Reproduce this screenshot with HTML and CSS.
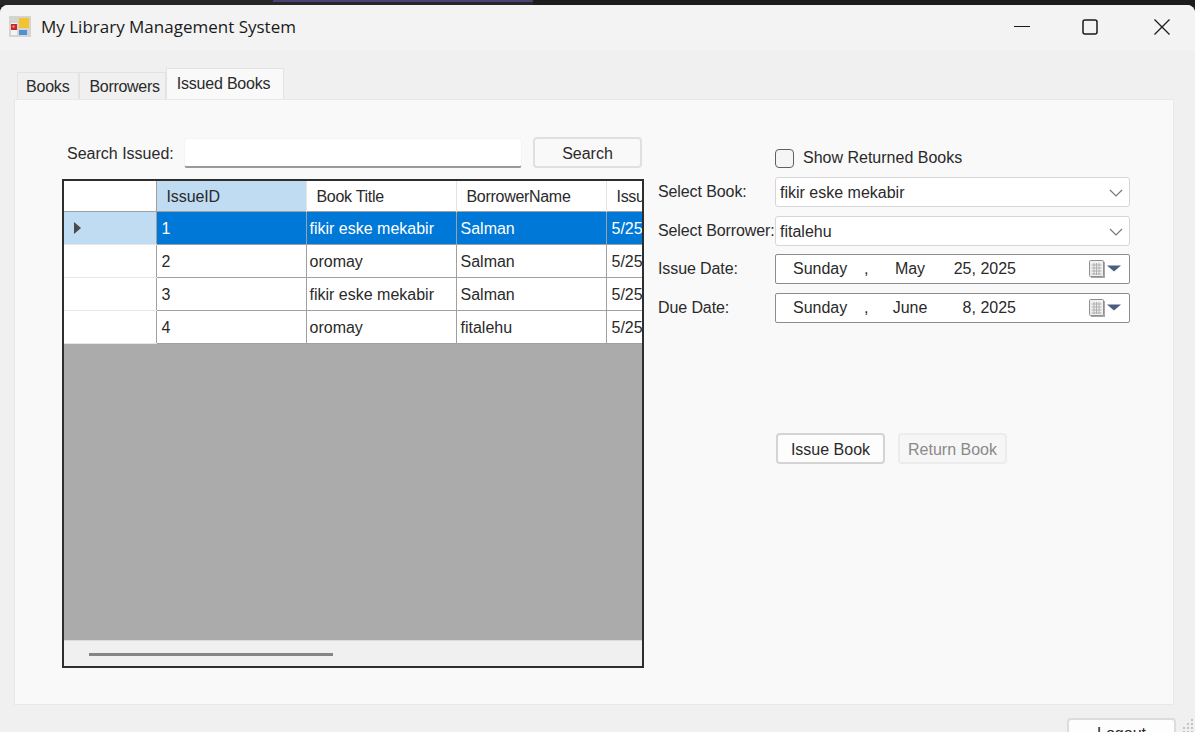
FILE: index.html
```html
<!DOCTYPE html>
<html lang="en">
<head>
  <meta charset="UTF-8" />
  <title>My Library Management System</title>
  <link rel="stylesheet" href="styles.css">
</head>
<body>
  <div class="taskstrip">
    <div class="strip-a"></div>
    <div class="strip-b"></div>
    <div class="strip-c"></div>
  </div>

  <div class="window">
    <div class="titlebar">
      <svg class="app-icon" width="22" height="21" viewBox="0 0 22 21">
        <rect x="0" y="0" width="22" height="21" fill="#d4d4d0"/>
        <rect x="2" y="7" width="6" height="12" fill="#f4f4f4"/>
        <rect x="2" y="8" width="6" height="6" fill="#c8262c"/>
        <rect x="3.5" y="9.5" width="2" height="2" fill="#f2a0a0"/>
        <rect x="10" y="2" width="10" height="10" fill="#f4c430"/>
        <rect x="10" y="14" width="8" height="5" fill="#4f8fd8"/>
      </svg>
      <span class="app-title">My Library Management System</span>
      <div class="caption-btns">
        <svg width="16" height="16" viewBox="0 0 16 16"><path d="M0 7.5H16" stroke="#1a1a1a" stroke-width="1.2" fill="none"/></svg>
        <svg width="16" height="16" viewBox="0 0 16 16"><rect x="1" y="1" width="14" height="14" rx="2" stroke="#1a1a1a" stroke-width="1.5" fill="none"/></svg>
        <svg class="caption-close" width="16" height="16" viewBox="0 0 16 16"><path d="M0.5 0.5L15.5 15.5M15.5 0.5L0.5 15.5" stroke="#1a1a1a" stroke-width="1.3" fill="none"/></svg>
      </div>
    </div>

    <div class="client">
      <div class="tabs">
        <div class="tab">Books</div>
        <div class="tab tab-borrowers">Borrowers</div>
        <div class="tab tab-active">Issued Books</div>
      </div>

      <div class="panel">
        <div class="left-col">
          <div class="search-row">
            <label class="search-label">Search Issued:</label>
            <div class="search-box"></div>
            <div class="btn search-btn">Search</div>
          </div>

          <div class="grid-box">
            <table class="grid">
              <colgroup>
                <col class="col-head">
                <col class="col-data">
                <col class="col-data">
                <col class="col-data">
                <col class="col-data">
              </colgroup>
              <tr class="head-row">
                <th></th>
                <th class="th-current">IssueID</th>
                <th>Book Title</th>
                <th>BorrowerName</th>
                <th>IssueDate</th>
              </tr>
              <tr class="selected">
                <td class="row-head row-head-on"><span class="row-arrow"></span></td>
                <td>1</td><td>fikir eske mekabir</td><td>Salman</td><td>5/25/2025</td>
              </tr>
              <tr>
                <td class="row-head"></td>
                <td>2</td><td>oromay</td><td>Salman</td><td>5/25/2025</td>
              </tr>
              <tr>
                <td class="row-head"></td>
                <td>3</td><td>fikir eske mekabir</td><td>Salman</td><td>5/25/2025</td>
              </tr>
              <tr>
                <td class="row-head"></td>
                <td>4</td><td>oromay</td><td>fitalehu</td><td>5/25/2025</td>
              </tr>
            </table>
            <div class="grid-empty"></div>
            <div class="hscroll"><div class="hscroll-thumb"></div></div>
          </div>
        </div>

        <div class="right-col">
          <div class="check-row">
            <span class="checkbox"></span>
            <span>Show Returned Books</span>
          </div>

          <div class="field field-book">
            <label>Select Book:</label>
            <div class="combo">
              <span>fikir eske mekabir</span>
              <svg class="chevron" width="14" height="8" viewBox="0 0 14 8"><path d="M1 1L7 7L13 1" stroke="#777" stroke-width="1.2" fill="none"/></svg>
            </div>
          </div>
          <div class="field field-borrower">
            <label>Select Borrower:</label>
            <div class="combo">
              <span>fitalehu</span>
              <svg class="chevron" width="14" height="8" viewBox="0 0 14 8"><path d="M1 1L7 7L13 1" stroke="#777" stroke-width="1.2" fill="none"/></svg>
            </div>
          </div>
          <div class="field field-issue">
            <label>Issue Date:</label>
            <div class="datebox">
              <span>Sunday</span><span>,</span><span class="d-month">May</span><span class="d-day">25, 2025</span>
              <svg class="cal" width="32" height="18" viewBox="0 0 32 18">
                <rect x="2" y="2" width="14" height="16" fill="#a8a8a8"/>
                <rect x="0.5" y="0.5" width="14" height="16" rx="1" fill="#f0f0f0" stroke="#8e8e8e"/>
                <path d="M2.5 5H12.5M2.5 8H12.5M2.5 11H12.5M2.5 14H12.5M5 3V15M7.5 3V15M10 3V15" stroke="#b0b0b0" stroke-width="1" fill="none"/>
                <path d="M18 5.5H32L25 11.5Z" fill="#4a5f80"/>
              </svg>
            </div>
          </div>
          <div class="field field-due">
            <label>Due Date:</label>
            <div class="datebox">
              <span>Sunday</span><span>,</span><span class="d-month">June</span><span class="d-day">8, 2025</span>
              <svg class="cal" width="32" height="18" viewBox="0 0 32 18">
                <rect x="2" y="2" width="14" height="16" fill="#a8a8a8"/>
                <rect x="0.5" y="0.5" width="14" height="16" rx="1" fill="#f0f0f0" stroke="#8e8e8e"/>
                <path d="M2.5 5H12.5M2.5 8H12.5M2.5 11H12.5M2.5 14H12.5M5 3V15M7.5 3V15M10 3V15" stroke="#b0b0b0" stroke-width="1" fill="none"/>
                <path d="M18 5.5H32L25 11.5Z" fill="#4a5f80"/>
              </svg>
            </div>
          </div>

          <div class="action-row">
            <div class="btn issue-btn">Issue Book</div>
            <div class="btn return-btn">Return Book</div>
          </div>
        </div>
      </div>

      <div class="footer-row">
        <div class="btn logout-btn">Logout</div>
        <svg class="grip" width="15" height="15" viewBox="0 0 15 15">
          <path d="M11 1h2v2h-2zM7 5h2v2H7zM11 5h2v2h-2zM3 9h2v2H3zM7 9h2v2H7zM11 9h2v2h-2zM3 13h2v2H3zM7 13h2v2H7zM11 13h2v2h-2z" fill="#c4c4c4"/>
        </svg>
      </div>
    </div>
  </div>
</body>
</html>
```

FILE: styles.css
```css
* {
  box-sizing: border-box;
}
html, body {
  height: 100%;
}
body {
  margin: 0;
  overflow: hidden;
  background-color: #1f1f1f;
  font-family: "Liberation Sans", Arial, sans-serif;
  font-size: 16px;
  color: #2a2a2a;
}

/* strip of the desktop above the window */
.taskstrip {
  display: flex;
  height: 5px;
}
.strip-a {
  width: 273px;
  background-color: #262626;
}
.strip-b {
  width: 260px;
  background-color: #262626;
  border-top: 2px solid #4b3f78;
}
.strip-c {
  flex: 1;
  background-color: #1c1c1c;
}

.window {
  height: 727px;
  background-color: #f0f0f0;
  border-radius: 8px 8px 0 0;
  overflow: hidden;
}
.titlebar {
  display: flex;
  align-items: center;
  height: 46px;
  padding: 0 0 3px 9px;
  background-color: #f3f3f3;
}
.app-icon {
  margin-right: 10px;
}
.app-title {
  font-family: "Open Sans", sans-serif;
  font-size: 17px;
  color: #1a1a1a;
}
.caption-btns {
  display: flex;
  gap: 52px;
  margin-left: auto;
  margin-right: 25px;
}
.caption-close {
  margin-left: 4px;
}

.client {
  padding: 17px 21px 0 14px;
}
.tabs {
  display: flex;
  align-items: flex-end;
  height: 31px;
  padding-left: 3px;
}
.tab {
  height: 27px;
  padding: 5px 9px 0 8px;
  background-color: #f0f0f0;
  border: 1px solid #e3e3e3;
  border-bottom: none;
  letter-spacing: -0.2px;
}
.tab-borrowers {
  padding: 5px 5px 0 9px;
  letter-spacing: -0.3px;
}
.tab-active {
  height: 31px;
  padding: 6px 13px 0 10px;
  background-color: #f9f9f9;
}

.panel {
  display: flex;
  height: 606px;
  padding: 38px 0 0 47px;
  background-color: #f9f9f9;
  border: 1px solid #e8e8e8;
}

.left-col {
  width: 582px;
}
.search-row {
  display: flex;
  align-items: center;
  height: 30px;
  padding-left: 5px;
}
.search-label {
  width: 117px;
  padding-top: 1px;
}
.search-box {
  width: 338px;
  height: 30px;
  background-color: #fff;
  border: 1px solid #f4f4f4;
  border-bottom: 2px solid #9a9a9a;
  border-radius: 3px;
}
.btn {
  display: flex;
  align-items: center;
  justify-content: center;
  padding-top: 3px;
  background-color: #fdfdfd;
  border: 2px solid #e0e0e0;
  border-radius: 4px;
}
.search-btn {
  width: 109px;
  height: 31px;
  margin: -2px 0 0 11px;
  padding-top: 4px;
  background-color: #f9f9f9;
}

.grid-box {
  width: 582px;
  height: 489px;
  margin-top: 11px;
  border: 2px solid #2e2e2e;
  overflow: hidden;
  display: flex;
  flex-direction: column;
}
.grid {
  table-layout: fixed;
  width: 692px;
  border-collapse: collapse;
  background-color: #fff;
  flex: none;
}
.col-head {
  width: 92px;
}
.col-data {
  width: 150px;
}
.grid th {
  height: 30px;
  padding: 2px 0 0 10px;
  font-weight: normal;
  text-align: left;
  white-space: nowrap;
  overflow: hidden;
  letter-spacing: -0.3px;
  border-right: 1px solid #e4e4e4;
}
.grid th:first-child {
  border-right: 1px solid #a0a0a0;
}
.grid th.th-current {
  background-color: #bfdcf3;
  letter-spacing: -0.1px;
}
.grid td {
  height: 33px;
  padding: 2px 0 0 3px;
  white-space: nowrap;
  overflow: hidden;
  border: 1px solid #a0a0a0;
  border-top: none;
}
.head-row {
  border-bottom: 1px solid #a0a0a0;
}
.grid td.row-head {
  padding: 0;
  border-left: none;
  background-color: #fff;
  border-bottom-color: #e6e6e6;
}
.grid td.row-head-on {
  background-color: #bfdcf3;
}
.row-arrow {
  display: block;
  width: 0;
  height: 0;
  margin-left: 10px;
  border-left: 7px solid #4a4a4a;
  border-top: 6.5px solid transparent;
  border-bottom: 6.5px solid transparent;
}
.grid td:nth-child(2) {
  padding-left: 5px;
}
.grid td:nth-child(4) {
  padding-left: 4px;
}
.grid td:nth-child(5) {
  padding-left: 5px;
}
.selected td {
  background-color: #0078d7;
  color: #fff;
}
.grid-empty {
  flex: 1;
  background-color: #ababab;
}
.hscroll {
  flex: none;
  height: 26px;
  padding: 12px 0 0 25px;
  background-color: #f0f0f0;
  border-top: 1px solid #dcdcdc;
}
.hscroll-thumb {
  width: 244px;
  height: 3px;
  background-color: #858585;
}

.right-col {
  width: 472px;
  margin-left: 14px;
}
.check-row {
  display: flex;
  align-items: center;
  height: 20px;
  margin-top: 10px;
  padding-left: 117px;
}
.checkbox {
  width: 19px;
  height: 19px;
  margin-right: 9px;
  background-color: #f5f5f5;
  border: 1.5px solid #606060;
  border-radius: 4px;
}
.field {
  display: flex;
  align-items: center;
  height: 30px;
}
.field label {
  width: 117px;
  flex: none;
  white-space: nowrap;
  letter-spacing: -0.1px;
}
.field-book {
  margin-top: 9px;
}
.field-borrower {
  margin-top: 9px;
}
.field-issue {
  margin-top: 8px;
}
.field-due {
  margin-top: 9px;
}
.combo {
  display: flex;
  align-items: center;
  justify-content: space-between;
  width: 355px;
  height: 30px;
  padding: 1px 6px 0 4px;
  background-color: #fff;
  border: 1px solid #d6d6d6;
  border-radius: 3px;
}
.datebox {
  display: grid;
  grid-template-columns: 71px 8px 76px 68px 1fr;
  align-items: center;
  width: 355px;
  height: 30px;
  padding: 0 0 0 17px;
  background-color: #fff;
  border: 1px solid #8c8c8c;
  border-radius: 2px;
}
.d-month {
  text-align: center;
}
.d-day {
  text-align: right;
}
.cal {
  margin-left: 73px;
}
.action-row {
  display: flex;
  gap: 13px;
  margin-top: 110px;
  padding-left: 118px;
}
.issue-btn {
  width: 109px;
  height: 31px;
  border-color: #d4d4d4;
}
.return-btn {
  width: 109px;
  height: 31px;
  color: #8a8a8a;
  background-color: #f6f6f6;
  border-color: #ececec;
}

.footer-row {
  display: flex;
  align-items: flex-start;
  justify-content: flex-end;
  height: 40px;
  margin-top: 13px;
  margin-right: -21px;
}
.logout-btn {
  width: 109px;
  height: 31px;
  margin-right: 4px;
  padding-top: 0;
  border-color: #dcdcdc;
}
.grip {
  flex: none;
}
```
